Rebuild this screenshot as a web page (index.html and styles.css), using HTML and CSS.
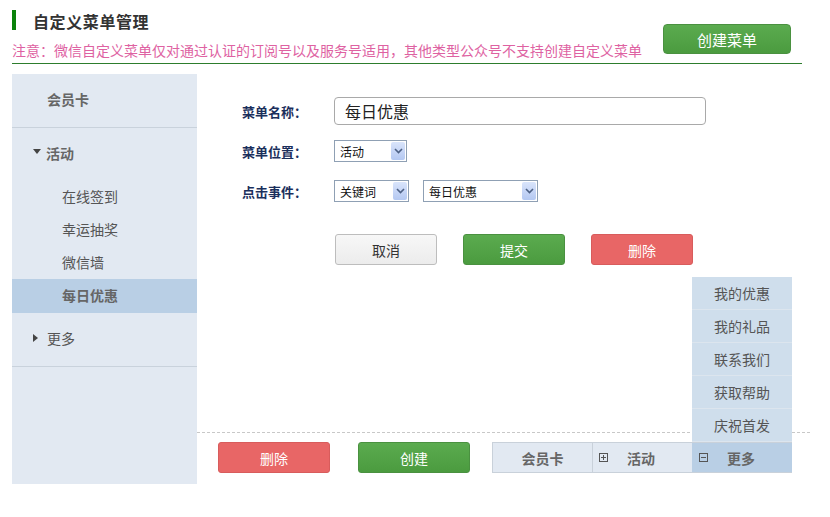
FILE: index.html
```html
<!DOCTYPE html>
<html lang="zh-CN">
<head>
<meta charset="utf-8">
<title>自定义菜单管理</title>
<link rel="stylesheet" href="styles.css">
</head>
<body>
<div class="page">
  <header class="head">
    <div class="head-text">
      <h1 class="title">自定义菜单管理</h1>
      <p class="notice">注意：微信自定义菜单仅对通过认证的订阅号以及服务号适用，其他类型公众号不支持创建自定义菜单</p>
    </div>
    <button class="btn btn-green btn-create">创建菜单</button>
  </header>

  <div class="body">
    <aside class="side">
      <div class="side-item side-top">会员卡</div>
      <div class="side-group">
        <div class="side-head"><span class="tri-down"></span>活动</div>
        <ul class="side-sub">
          <li>在线签到</li>
          <li>幸运抽奖</li>
          <li>微信墙</li>
          <li class="active">每日优惠</li>
        </ul>
      </div>
      <div class="side-item side-more"><span class="tri-right"></span>更多</div>
    </aside>

    <main class="main">
      <div class="form">
        <div class="row row-name">
          <label class="lbl">菜单名称：</label>
          <div class="input">每日优惠</div>
        </div>
        <div class="row row-pos">
          <label class="lbl">菜单位置：</label>
          <div class="select sel-pos"><span class="sel-text">活动</span><span class="sel-arrow"><svg width="9" height="6" viewBox="0 0 9 6"><path d="M1 1 L4.5 4.5 L8 1" fill="none" stroke="#4d6185" stroke-width="1.6"/></svg></span></div>
        </div>
        <div class="row row-event">
          <label class="lbl">点击事件：</label>
          <div class="select sel-kw"><span class="sel-text">关键词</span><span class="sel-arrow"><svg width="9" height="6" viewBox="0 0 9 6"><path d="M1 1 L4.5 4.5 L8 1" fill="none" stroke="#4d6185" stroke-width="1.6"/></svg></span></div>
          <div class="select sel-val"><span class="sel-text">每日优惠</span><span class="sel-arrow"><svg width="9" height="6" viewBox="0 0 9 6"><path d="M1 1 L4.5 4.5 L8 1" fill="none" stroke="#4d6185" stroke-width="1.6"/></svg></span></div>
        </div>
        <div class="actions">
          <button class="btn btn-gray">取消</button>
          <button class="btn btn-green">提交</button>
          <button class="btn btn-red">删除</button>
        </div>
      </div>

      <div class="foot">
        <button class="btn btn-red btn-foot">删除</button>
        <button class="btn btn-green btn-foot">创建</button>
        <div class="tabs">
          <div class="tab tab-first">会员卡</div>
          <div class="tab tab-icon"><svg class="ico" width="9" height="9" viewBox="0 0 9 9"><rect x="0.5" y="0.5" width="8" height="8" fill="none" stroke="#555"/><path d="M2 4.5 H7 M4.5 2 V7" stroke="#555"/></svg><span>活动</span></div>
          <div class="tab tab-icon tab-active"><svg class="ico" width="9" height="9" viewBox="0 0 9 9"><rect x="0.5" y="0.5" width="8" height="8" fill="none" stroke="#555"/><path d="M2 4.5 H7" stroke="#555"/></svg><span>更多</span>
            <ul class="submenu">
              <li>我的优惠</li>
              <li>我的礼品</li>
              <li>联系我们</li>
              <li>获取帮助</li>
              <li>庆祝首发</li>
            </ul>
          </div>
        </div>
      </div>
    </main>
  </div>
</div>
</body>
</html>
```

FILE: styles.css
```css
* { box-sizing: border-box; }
html, body { margin: 0; padding: 0; background: #fff; }
body {
  font-family: "Noto Sans CJK SC", "Noto Sans", "Liberation Sans", sans-serif;
  font-size: 14px;
  color: #555;
  width: 830px;
  height: 517px;
  overflow: hidden;
}
.page { padding-left: 12px; }

.head {
  width: 790px;
  height: 64px;
  padding-top: 10px;
  border-bottom: 1px solid #2d7d2d;
  display: flex;
  justify-content: space-between;
  align-items: flex-start;
}
.title {
  margin: 0;
  height: 20px;
  line-height: 22px;
  border-left: 4px solid #0b820b;
  padding-left: 17px;
  font-size: 16px;
  font-weight: bold;
  color: #333;
  letter-spacing: 0.6px;
}
.notice {
  margin: 12px 0 0;
  line-height: 16px;
  font-size: 14px;
  color: #de62a2;
  white-space: nowrap;
}

.btn {
  font-family: inherit;
  font-size: 14px;
  border-radius: 3px;
  cursor: pointer;
  padding: 0;
  line-height: 1;
}
.btn-green {
  background: linear-gradient(#5bab4f, #4b9b3f);
  border: 1px solid #4a9140;
  color: #fff;
}
.btn-red {
  background: #e86666;
  border: 1px solid #d85c5c;
  color: #fff;
}
.btn-gray {
  background: linear-gradient(#f7f7f7, #ececec);
  border: 1px solid #bdbdbd;
  color: #333;
}
.btn-create {
  margin-top: 14px;
  margin-right: 11px;
  width: 128px;
  height: 30px;
  font-size: 15px;
  border-radius: 4px;
}

.body {
  display: flex;
  margin-top: 10px;
}

.side {
  width: 185px;
  height: 410px;
  background: #e2e9f2;
}
.side-item, .side-head {
  display: flex;
  align-items: center;
  color: #666;
  font-weight: bold;
}
.side-top {
  height: 54px;
  padding-left: 35px;
  padding-bottom: 4px;
  border-bottom: 1px solid #c9d2dc;
}
.side-head {
  height: 52px;
  padding-left: 21px;
  padding-bottom: 3px;
}
.tri-down {
  width: 0; height: 0;
  border-left: 4px solid transparent;
  border-right: 4px solid transparent;
  border-top: 5px solid #444;
  margin-right: 5px;
  margin-top: -2px;
}
.tri-right {
  width: 0; height: 0;
  border-top: 4px solid transparent;
  border-bottom: 4px solid transparent;
  border-left: 5px solid #444;
  margin-right: 9px;
}
.side-sub {
  list-style: none;
  margin: 0;
  padding: 0;
}
.side-sub li {
  height: 33px;
  line-height: 33px;
  padding-left: 50px;
  color: #555;
}
.side-sub li.active {
  background: #b9cfe5;
  font-weight: bold;
  color: #666;
  height: 34px;
  line-height: 33px;
}
.side-more {
  height: 54px;
  padding-left: 21px;
  padding-bottom: 3px;
  border-bottom: 1px solid #c9d2dc;
  font-weight: normal;
  color: #555;
}

.main {
  width: 613px;
  height: 410px;
  display: flex;
  flex-direction: column;
}
.form {
  flex: 1;
  padding: 23px 0 0 45px;
}
.row {
  display: flex;
  align-items: center;
}
.row-name { height: 28px; }
.row-pos { height: 22px; margin-top: 15px; }
.row-event { height: 22px; margin-top: 18px; }
.lbl {
  width: 92px;
  font-size: 13px;
  font-weight: bold;
  color: #1b2f5c;
}
.input {
  width: 372px;
  height: 28px;
  border: 1px solid #a9a9a9;
  border-radius: 4px;
  padding-left: 10px;
  font-size: 16px;
  color: #222;
  line-height: 26px;
}
.select {
  height: 22px;
  border: 1px solid #8fa0b4;
  display: flex;
  align-items: center;
  justify-content: space-between;
  padding: 1px 1px 1px 5px;
  background: #fff;
}
.sel-text { font-size: 12px; color: #111; }
.sel-arrow {
  width: 14px;
  height: 18px;
  background: linear-gradient(#d9e4fb, #b4c8f2);
  border-radius: 2px;
  display: flex;
  align-items: center;
  justify-content: center;
}
.sel-pos { width: 73px; }
.sel-kw { width: 75px; }
.sel-val { width: 115px; margin-left: 14px; }

.actions {
  display: flex;
  gap: 26px;
  margin-top: 32px;
  padding-left: 93px;
}
.actions .btn {
  width: 102px;
  height: 31px;
}

.foot {
  height: 52px;
  border-top: 1px dashed #c8c8c8;
  padding: 9px 0 0 21px;
  display: flex;
  align-items: flex-start;
}
.btn-foot {
  width: 112px;
  height: 31px;
  margin-right: 28px;
}
.btn-foot + .btn-foot { margin-right: 22px; }

.tabs {
  display: flex;
  width: 300px;
  border: 1px solid #c9d1da;
  border-right: none;
  height: 31px;
}
.tab {
  width: 100px;
  background: #e2e9f2;
  display: flex;
  align-items: center;
  justify-content: center;
  font-weight: bold;
  color: #666;
  position: relative;
}
.tab-first { width: 99px; }
.tab + .tab { border-left: 1px solid #c9d1da; }
.tab-icon {
  justify-content: flex-start;
  padding-left: 6px;
}
.tab-icon .ico { margin-right: 19px; }
.tab-active {
  background: #b9cfe5;
  border-left-color: #b9cfe5 !important;
}
.submenu {
  position: absolute;
  left: -1px;
  bottom: 100%;
  margin: 0 0 1px;
  padding: 0;
  list-style: none;
  width: 100px;
  background: #cfdeec;
}
.submenu li {
  height: 33px;
  line-height: 32px;
  text-align: center;
  font-weight: normal;
  color: #555;
  border-bottom: 1px solid #dce5ee;
}
```
